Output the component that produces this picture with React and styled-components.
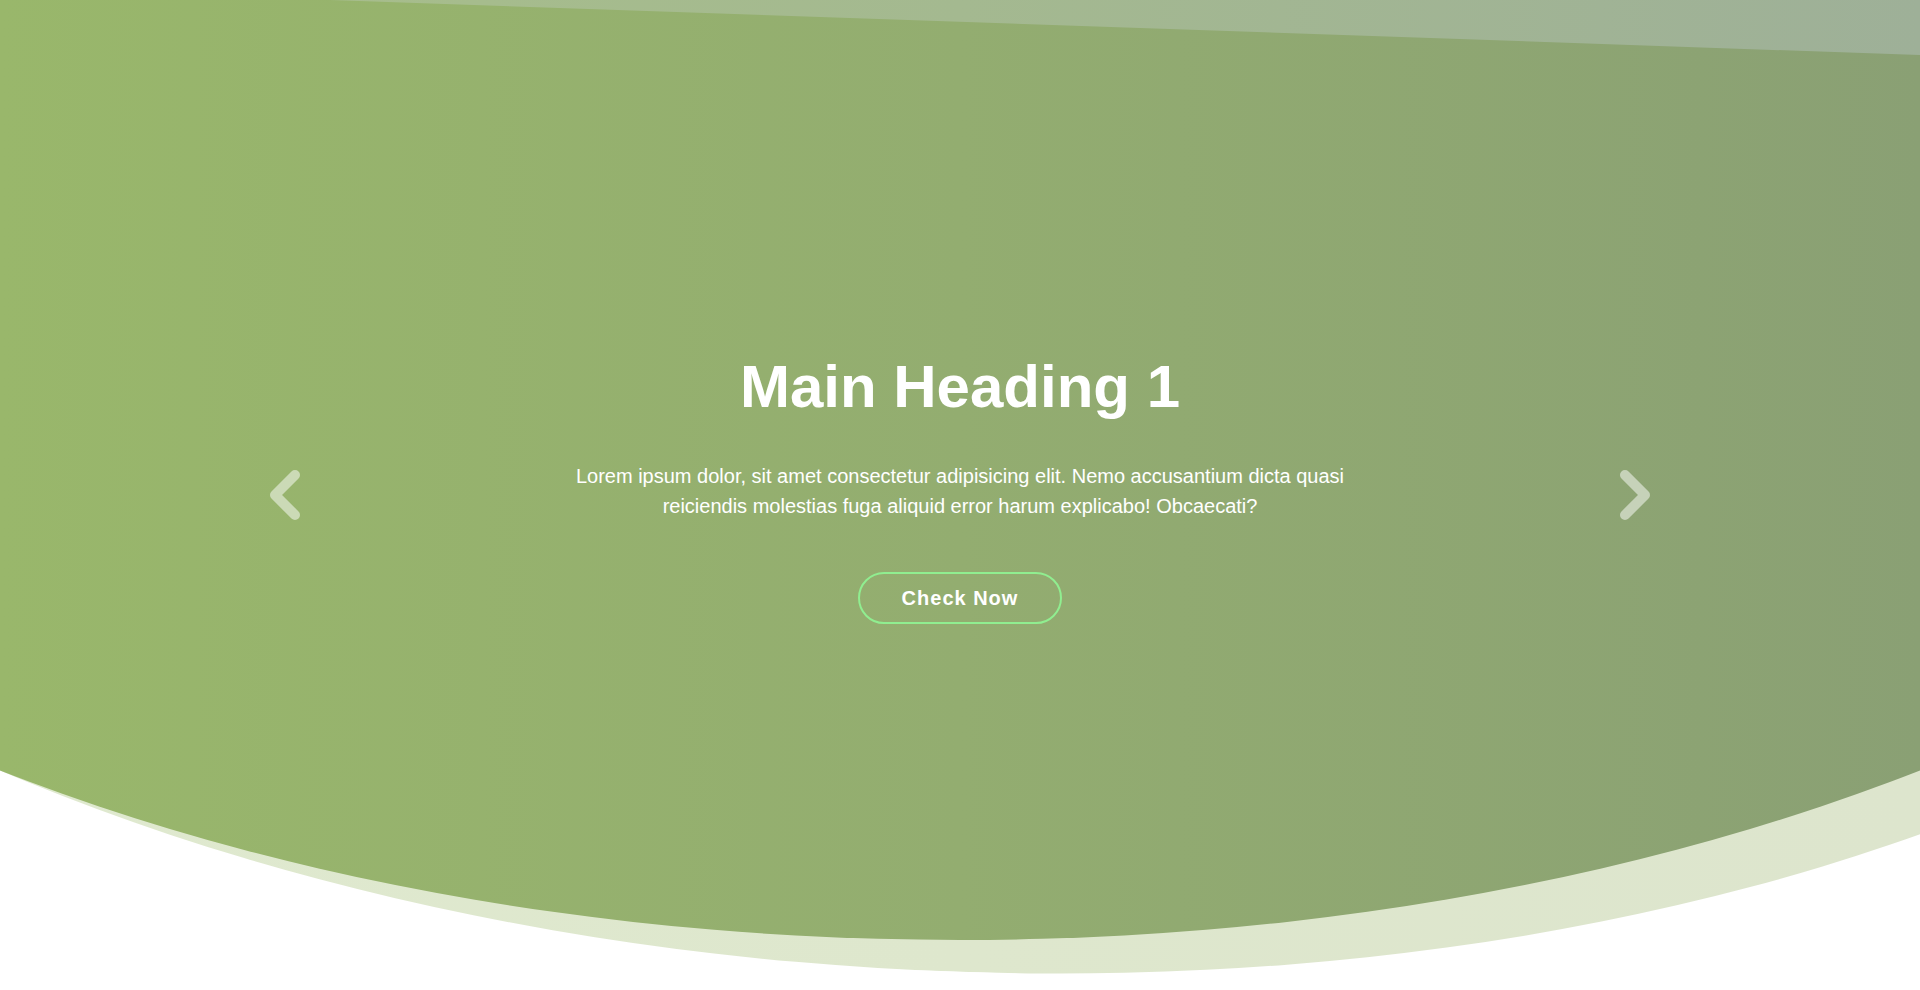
import React from "react";
import styled, { createGlobalStyle } from "styled-components";
import { ChevronLeft, ChevronRight } from "lucide-react";

const GlobalStyle = createGlobalStyle`
  html, body {
    margin: 0;
    padding: 0;
    background: #ffffff;
  }
  body {
    font-family: "Liberation Sans", Arial, sans-serif;
    overflow: hidden;
  }
  * { box-sizing: border-box; }
`;

const Hero = styled.section`
  position: relative;
  height: 990px;
  overflow: hidden;
  isolation: isolate;

  &::before {
    content: "";
    position: absolute;
    left: 0;
    top: 0;
    width: 100%;
    height: 940px;
    background: linear-gradient(to right, #dfe9cf 0%, #dee7cd 50%, #dde5cd 100%);
    clip-path: ellipse(87.3% 100% at 50% 0%);
    transform: skewY(1.9deg);
    transform-origin: 0 0;
    z-index: -1;
  }
`;

const Stage = styled.div`
  position: relative;
  height: 940px;
  padding-top: 50px;
  display: flex;
  align-items: center;
  justify-content: center;
  background: linear-gradient(to right, #99b76b 0%, #93ad70 50%, #8aa074 100%);
  clip-path: ellipse(87.3% 100% at 50% 0%);

  &::before {
    content: "";
    position: absolute;
    inset: 0;
    background: linear-gradient(to right, #a8bf8a 0%, #a4b990 50%, #9eb098 100%);
    clip-path: polygon(330px 0, 100% 0, 100% 55px);
    pointer-events: none;
  }
`;

const Row = styled.div`
  position: relative;
  width: 1430px;
  display: flex;
  align-items: center;
  justify-content: space-between;
`;

const ArrowButton = styled.button`
  width: 80px;
  height: 80px;
  padding: 0;
  border: none;
  background: none;
  color: rgba(255, 255, 255, 0.5);
  display: flex;
  align-items: center;
  justify-content: center;
  cursor: pointer;
`;

const Content = styled.div`
  display: flex;
  flex-direction: column;
  align-items: center;
  text-align: center;
  color: #ffffff;
  margin-bottom: 15px;
`;

const Heading = styled.h1`
  margin: 0 0 38px;
  font-size: 60px;
  line-height: 72px;
  font-weight: 700;
`;

const Text = styled.p`
  margin: 0 0 51px;
  max-width: 800px;
  font-size: 20px;
  line-height: 30px;
`;

const CheckButton = styled.button`
  padding: 12px 42px;
  border: 2px solid #90ee90;
  border-radius: 30px;
  background: transparent;
  color: #ffffff;
  font-family: inherit;
  font-size: 20px;
  line-height: 24px;
  font-weight: 700;
  letter-spacing: 1px;
  cursor: pointer;
`;

export default function App() {
  return (
    <>
      <GlobalStyle />
      <Hero>
        <Stage>
          <Row>
            <ArrowButton aria-label="Previous">
              <ChevronLeft size={80} strokeWidth={3} />
            </ArrowButton>
            <Content>
              <Heading>Main Heading 1</Heading>
              <Text>
                Lorem ipsum dolor, sit amet consectetur adipisicing elit. Nemo
                accusantium dicta quasi reiciendis molestias fuga aliquid error
                harum explicabo! Obcaecati?
              </Text>
              <CheckButton>Check Now</CheckButton>
            </Content>
            <ArrowButton aria-label="Next">
              <ChevronRight size={80} strokeWidth={3} />
            </ArrowButton>
          </Row>
        </Stage>
      </Hero>
    </>
  );
}
